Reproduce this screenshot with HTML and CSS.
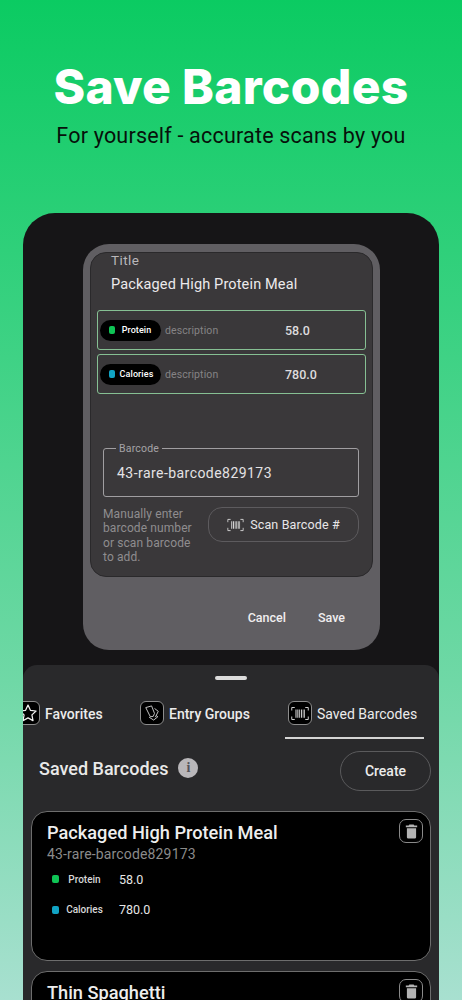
FILE: index.html
```html
<!DOCTYPE html>
<html lang="en">
<head>
    <meta charset="UTF-8">
    <title>Save Barcodes</title>
    <link rel="stylesheet" href="styles.css">
</head>
<body>

    <header class="hero">
        <h1>Save Barcodes</h1>
        <p>For yourself - accurate scans by you</p>
    </header>

    <div class="phone">

        <div class="dialog">
            <div class="dialog-card">
                <div class="field-label">Title</div>
                <div class="field-value">Packaged High Protein Meal</div>

                <div class="entry">
                    <span class="pill"><i class="dot green"></i><b>Protein</b></span>
                    <span class="desc">description</span>
                    <span class="amount">58.0</span>
                </div>
                <div class="entry">
                    <span class="pill"><i class="dot blue"></i><b>Calories</b></span>
                    <span class="desc">description</span>
                    <span class="amount">780.0</span>
                </div>

                <fieldset class="barcode">
                    <legend>Barcode</legend>
                    <div>43-rare-barcode829173</div>
                </fieldset>

                <div class="scan-row">
                    <p>Manually enter barcode number or scan barcode to add.</p>
                    <div class="scan-btn">
                        <svg class="scan-icon" viewBox="0 0 24 20"><use href="#barcode"/></svg>
                        <span>Scan Barcode #</span>
                    </div>
                </div>
            </div>
            <div class="dialog-actions">
                <span>Cancel</span>
                <span>Save</span>
            </div>
        </div>

        <div class="sheet">
            <div class="handle"></div>

            <div class="tabs">
                <div class="tab tab-fav">
                    <span class="tab-icon">
                        <svg viewBox="0 0 24 24" fill="none" stroke="#f2f2f2" stroke-width="1.500" stroke-linejoin="round"><path d="M12 2.500l2.900 6.300 6.800.8-5 4.700 1.300 6.900-6-3.400-6 3.400 1.300-6.900-5-4.700 6.800-.8z"/></svg>
                    </span>
                    Favorites
                </div>
                <div class="tab tab-groups">
                    <span class="tab-icon">
                        <svg viewBox="0 0 24 24" fill="none" stroke="#d0d0d0" stroke-width="1.100" stroke-linejoin="round"><path d="M4.500 5.500l7-2 3.500 9-1.500 3.500-3.500.5z"/><path d="M15 6.500l4.500 3.500-3.500 7"/><path d="M8.500 17l5.500 3.500 5-4-2-1.500"/></svg>
                    </span>
                    Entry Groups
                </div>
                <div class="tab tab-active">
                    <span class="tab-icon">
                        <svg viewBox="0 0 24 20"><use href="#barcode"/></svg>
                    </span>
                    Saved Barcodes
                </div>
            </div>

            <div class="sheet-head">
                <h2>Saved Barcodes</h2>
                <span class="info">i</span>
                <div class="create">Create</div>
            </div>

            <div class="card">
                <div class="trash"><svg viewBox="0 0 24 24"><use href="#trash"/></svg></div>
                <div class="card-name">Packaged High Protein Meal</div>
                <div class="card-code">43-rare-barcode829173</div>
                <div class="stat">
                    <i class="dot green"></i><span class="stat-name">Protein</span><span class="stat-num">58.0</span>
                </div>
                <div class="stat">
                    <i class="dot blue"></i><span class="stat-name">Calories</span><span class="stat-num">780.0</span>
                </div>
            </div>

            <div class="card">
                <div class="trash"><svg viewBox="0 0 24 24"><use href="#trash"/></svg></div>
                <div class="card-name">Thin Spaghetti</div>
            </div>
        </div>
    </div>

    <!-- shared icons -->
    <svg class="defs" width="0" height="0">
        <symbol id="barcode" viewBox="0 0 24 20">
            <path d="M1 6V2h4M19 2h4v4M1 14v4h4M19 18h4v-4" fill="none" stroke="#e4e4e4" stroke-width="1.200"/>
            <path d="M6 4.500h1.300v11H6zM8.500 4.500h1.300v11H8.500zM11 4.500h1v11h-1zM13.200 4.500h1.300v11h-1.300zM15.700 4.500h.9v11h-.9zM17.500 4.500h1v11h-1z" fill="#e4e4e4"/>
        </symbol>
        <symbol id="trash" viewBox="0 0 24 24">
            <path d="M9 2h6l1 1.500h4V6H4V3.500h4zM5.500 7.500h13V20a2 2 0 0 1-2 2h-9a2 2 0 0 1-2-2z" fill="#b4b4b4"/>
        </symbol>
    </svg>

</body>
</html>
```

FILE: styles.css
```css
* {
    margin: 0;
    padding: 0;
    box-sizing: border-box;
}
html, body {
    height: 1000px;
    overflow: hidden;
}
body {
    width: 462px;
    background: linear-gradient(180deg, #0bcb62 0%, #2fd07a 25%, #6fd8a6 68%, #a8e0d0 100%);
    font-family: Roboto, "Noto Sans", sans-serif;
    color: #fff;
}
.defs {
    position: absolute;
}

/* top text */
.hero {
    height: 213px;
    padding-top: 58px;
    text-align: center;
}
.hero h1 {
    font-family: Inter, "Liberation Sans", sans-serif;
    font-size: 48px;
    font-weight: 800;
    line-height: 58px;
    letter-spacing: 0.3px;
    white-space: nowrap;
}
.hero p {
    margin-top: 7px;
    font-size: 21.500px;
    line-height: 26px;
    letter-spacing: 0.2px;
    color: #07110b;
}

/* phone */
.phone {
    margin: 0 23px;
    height: 787px;
    padding-top: 31px;
    background: #161517;
    border-radius: 32px 32px 0 0;
    overflow: hidden;
}

/* dialog */
.dialog {
    width: 297px;
    height: 406px;
    margin-left: 60px;
    padding: 8px 7px 0;
    background: #605e62;
    border-radius: 26px;
}
.dialog-card {
    height: 325px;
    padding: 0 6px;
    background: #3a383a;
    border: 1px solid #2a292b;
    border-radius: 16px;
    overflow: hidden;
}
.field-label {
    margin: -1px 0 0 14px;
    font-size: 13.500px;
    line-height: 16px;
    letter-spacing: 0.4px;
    color: #b9b7ba;
}
.field-value {
    margin: 7px 0 15px 14px;
    font-size: 14.500px;
    line-height: 20px;
    letter-spacing: 0.15px;
    color: #eceaec;
}
.entry {
    display: flex;
    align-items: center;
    height: 40px;
    margin-bottom: 4px;
    padding-left: 2px;
    border: 1px solid #86c093;
    border-radius: 3px;
}
.pill {
    display: flex;
    align-items: center;
    width: 61px;
    height: 21px;
    padding-left: 9px;
    background: #000;
    border-radius: 11px;
}
.pill b {
    flex: 1;
    padding-right: 3px;
    font-size: 9px;
    font-weight: 500;
    text-align: center;
    letter-spacing: 0.1px;
}
.dot {
    width: 6px;
    height: 8px;
    border-radius: 2px;
    flex: none;
}
.green {
    background: #0fc455;
}
.blue {
    background: #11a3c4;
}
.desc {
    margin-left: 4px;
    width: 120px;
    font-size: 10.500px;
    letter-spacing: 0.1px;
    color: #858385;
}
.amount {
    font-size: 12.500px;
    font-weight: 500;
    color: #dedcde;
}
.barcode {
    height: 55px;
    margin: 48px 7px 0 6px;
    padding: 10px 0 0 13px;
    border: 1px solid #a09ea1;
    border-radius: 3px;
    font-size: 14px;
    letter-spacing: 0.45px;
    color: #e4e2e4;
}
.barcode legend {
    padding: 0 3px;
    margin-left: -1px;
    font-size: 10.500px;
    letter-spacing: 0.2px;
    color: #a5a3a6;
}
.scan-row {
    display: flex;
    margin: 10px 7px 0 6px;
    gap: 9px;
}
.scan-row p {
    width: 96px;
    font-size: 12px;
    line-height: 14.300px;
    letter-spacing: 0.1px;
    color: #8f8d8f;
}
.scan-btn {
    display: flex;
    align-items: center;
    justify-content: center;
    gap: 6px;
    width: 151px;
    height: 35px;
    border: 1px solid #5d5b5e;
    border-radius: 14px;
    font-size: 12.500px;
    letter-spacing: 0.15px;
    color: #e8e6e8;
}
.scan-icon {
    width: 17px;
    height: 14px;
}
.dialog-actions {
    display: flex;
    justify-content: flex-end;
    gap: 32px;
    padding: 33px 28px 0 0;
    font-size: 12.500px;
    font-weight: 500;
    color: #f0eef0;
}

/* bottom sheet */
.sheet {
    height: 400px;
    margin-top: 15px;
    padding: 11px 8px 0;
    background: #29292b;
    border-radius: 14px 14px 0 0;
}
.handle {
    width: 32px;
    height: 4px;
    margin-left: 184px;
    background: #dcdcdc;
    border-radius: 2px;
}
.tabs {
    display: flex;
    height: 39px;
    margin: 21px 0 0 -15px;
    font-size: 14px;
    font-weight: 500;
    color: #ececec;
}
.tab {
    display: flex;
    align-items: flex-start;
    gap: 5px;
    line-height: 26px;
    white-space: nowrap;
}
.tab-fav {
    width: 124px;
}
.tab-groups {
    width: 145px;
}
.tab-active {
    width: 139px;
    padding-left: 3px;
    gap: 5px;
    height: 38px;
    border-bottom: 2px solid #d4d4d4;
    font-weight: 400;
}
.tab-icon {
    display: flex;
    align-items: center;
    justify-content: center;
    width: 24px;
    height: 24px;
    background: #000;
    border: 1px solid #8c8c8c;
    border-radius: 6px;
    flex: none;
}
.tab-icon svg {
    width: 20px;
    height: 20px;
}
.tab-active .tab-icon svg {
    width: 18px;
    height: 15px;
}
.sheet-head {
    display: flex;
    align-items: center;
    height: 40px;
    margin-top: 11px;
    padding-left: 8px;
}
.sheet-head h2 {
    margin-bottom: 6px;
    font-size: 18px;
    font-weight: 500;
    color: #e9e9e9;
}
.info {
    width: 20px;
    height: 20px;
    margin: 0 0 6px 10px;
    background: #b9b7ba;
    border-radius: 50%;
    font-family: "Liberation Serif", serif;
    font-size: 14px;
    font-weight: 700;
    line-height: 20px;
    text-align: center;
    color: #55535a;
}
.create {
    width: 91px;
    height: 40px;
    margin-left: auto;
    border: 1px solid #5a5a5c;
    border-radius: 20px;
    font-size: 14px;
    font-weight: 500;
    line-height: 39px;
    text-align: center;
    color: #ececec;
}

/* saved cards */
.card {
    position: relative;
    height: 150px;
    margin-top: 20px;
    margin-bottom: -10px;
    padding: 10px 15px;
    background: #000;
    border: 1px solid #6d6d6d;
    border-radius: 16px;
}
.card-name {
    font-size: 18.200px;
    font-weight: 500;
    line-height: 22px;
    color: #eee;
}
.card-code {
    margin-top: 1px;
    margin-bottom: 1px;
    font-size: 14px;
    line-height: 18px;
    letter-spacing: 0.15px;
    color: #8b8b8b;
}
.stat {
    display: flex;
    align-items: center;
    height: 30.500px;
    padding-left: 5px;
}
.stat .dot {
    width: 7px;
}
.stat-name {
    width: 51px;
    font-size: 10px;
    font-weight: 500;
    text-align: center;
    color: #d8d8d8;
}
.stat-num {
    margin-left: 9px;
    font-size: 12.500px;
    color: #e6e6e6;
}
/* sits over the corner of the card */
.trash {
    position: absolute;
    top: 7px;
    right: 7px;
    display: flex;
    align-items: center;
    justify-content: center;
    width: 24px;
    height: 24px;
    border: 1px solid #8a8a8a;
    border-radius: 7px;
}
.trash svg {
    width: 17px;
    height: 17px;
}
```
